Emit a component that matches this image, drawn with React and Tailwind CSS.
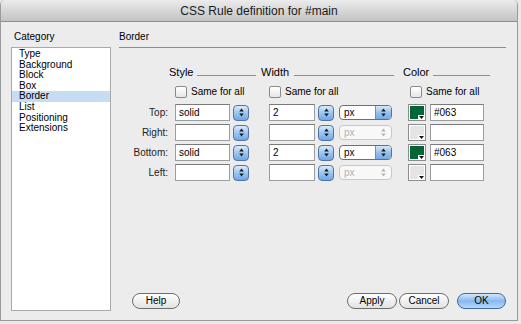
import React from 'react';

const font = { fontFamily: '"Liberation Sans", Arial, sans-serif' };

function Arrows({ color = '#1a1a1a' }) {
  return (
    <svg width="5" height="9" viewBox="0 0 5 9">
      <path d="M2.5 0.5L4.8 3.4H0.2z M2.5 8.5L0.2 5.6H4.8z" fill={color} />
    </svg>
  );
}

function Spin() {
  return (
    <div className="ml-[3px] flex h-[16px] w-[16px] items-center justify-center rounded-[4px] border border-[#5274a3] bg-linear-to-b from-[#dbeafb] via-[#9cc5f0] to-[#6fa8e6]">
      <Arrows />
    </div>
  );
}

function Input({ width, value }) {
  return (
    <div
      className={
        'h-[17px] border border-[#9d9d9d] border-t-[#7a7a7a] bg-white pl-[3px] text-[10px] leading-[15px] text-black ' +
        width
      }
    >
      {value}
    </div>
  );
}

function Select({ disabled }) {
  if (disabled) {
    return (
      <div className="ml-[5px] flex h-[15px] w-[53px] overflow-hidden rounded-[4px] border border-[#c8c8c8] bg-[#f8f8f8]">
        <span className="flex-1 pl-[4px] text-[10px] leading-[13px] text-[#b0b0b0]">px</span>
        <div className="flex w-[16px] items-center justify-center">
          <Arrows color="#b4b4b4" />
        </div>
      </div>
    );
  }
  return (
    <div className="ml-[5px] flex h-[15px] w-[53px] overflow-hidden rounded-[4px] border border-[#6f6f6f] bg-white">
      <span className="flex-1 pl-[4px] text-[10px] leading-[13px]">px</span>
      <div className="flex w-[16px] items-center justify-center border-l border-[#6d8fbe] bg-linear-to-b from-[#d6e8fb] via-[#97c2ef] to-[#74aae6]">
        <Arrows />
      </div>
    </div>
  );
}

function Swatch({ filled }) {
  return (
    <div className="relative ml-[16px] h-[17px] w-[18px] border border-[#8d8d8d] bg-white p-[1px]">
      <div className={filled ? 'h-full w-full bg-[#006633]' : 'h-full w-full bg-[#e4e4e4]'} />
      <div className="absolute right-0 bottom-0 flex h-[5px] w-[7px] items-center justify-center bg-white">
        <svg width="5" height="3" viewBox="0 0 5 3">
          <path d="M0 0H5L2.5 3z" fill="#111" />
        </svg>
      </div>
    </div>
  );
}

function Checkbox({ className }) {
  return (
    <div className={'flex items-center ' + className}>
      <div className="h-[12px] w-[12px] rounded-[2px] border border-[#8a8a8a] bg-linear-to-b from-white to-[#e6e6e6]" />
      <span className="ml-[4px] text-[10px] leading-[12px]">Same for all</span>
    </div>
  );
}

function Row({ label, style, width, color, on }) {
  return (
    <div className="flex h-[17px] items-center">
      <div className="w-[56px] pr-[7px] text-right text-[10px] text-[#222]">{label}</div>
      <Input width="w-[55px]" value={style} />
      <Spin />
      <div className="ml-[20px]">
        <Input width="w-[46px]" value={width} />
      </div>
      <Spin />
      <Select disabled={!on} />
      <Swatch filled={on} />
      <div className="ml-[4px]">
        <Input width="w-[54px]" value={color} />
      </div>
    </div>
  );
}

function Pill({ children, width, primary }) {
  return (
    <button
      className={
        'block h-[16px] rounded-full border text-[10px] leading-[14px] ' +
        width +
        (primary
          ? ' border-[#3f6aa2] bg-linear-to-b from-[#d3e7fc] via-[#86b9ee] to-[#b5d8f8]'
          : ' border-[#6e6e6e] bg-linear-to-b from-white to-[#e2e2e2]')
      }
    >
      {children}
    </button>
  );
}

const categories = ['Type', 'Background', 'Block', 'Box', 'Border', 'List', 'Positioning', 'Extensions'];

export default function App() {
  return (
    <div className="h-[324px] w-[521px] bg-[#e9e9e9] text-black" style={font}>
      <div className="flex h-[321px] w-[518px] flex-col overflow-hidden rounded-t-[5px] border-x border-b border-[#9b9b9b] bg-[#ececec]">
        {/* Title bar */}
        <div className="flex h-[22px] shrink-0 items-center justify-center border-b border-[#8f8f8f] bg-linear-to-b from-[#ececec] to-[#c3c3c3] text-[12px] text-[#1a1a1a]">
          CSS Rule definition for #main
        </div>

        <div className="flex flex-1 pl-[10px] pb-[9px]">
          {/* Category list */}
          <div className="flex w-[100px] flex-col pt-[9px]">
            <div className="pl-[3px] text-[10px] leading-[12px]">Category</div>
            <div className="mt-[4px] flex-1 border border-[#a9a9a9] bg-white pt-[1px]">
              {categories.map((c) => (
                <div
                  key={c}
                  className={
                    'pl-[7px] text-[10px] leading-[10.6px] ' + (c === 'Border' ? 'bg-[#c5dcf2]' : '')
                  }
                >
                  {c}
                </div>
              ))}
            </div>
          </div>

          {/* Border panel */}
          <div className="ml-[8px] flex w-[387px] flex-col pt-[9px]">
            <div className="text-[10px] leading-[12px]">Border</div>
            <div className="mt-[4px] h-px bg-[#8e8e8e]" />

            <div className="mt-[17px] flex h-[14px] text-[11px] leading-[14px]">
              <div className="ml-[50px] flex w-[87px]">
                <span>Style</span>
                <div className="mb-[3px] ml-[4px] h-px flex-1 self-end bg-[#8e8e8e]" />
              </div>
              <div className="ml-[5px] flex w-[133px]">
                <span>Width</span>
                <div className="mb-[3px] ml-[5px] h-px flex-1 self-end bg-[#8e8e8e]" />
              </div>
              <div className="ml-[9px] flex w-[87px]">
                <span>Color</span>
                <div className="mb-[3px] ml-[4px] h-px flex-1 self-end bg-[#8e8e8e]" />
              </div>
            </div>

            <div className="mt-[7px] flex h-[12px] pl-[56px]">
              <Checkbox className="w-[94px]" />
              <Checkbox className="w-[141px]" />
              <Checkbox />
            </div>

            <div className="mt-[6px] flex flex-col gap-[3px]">
              <Row label="Top:" style="solid" width="2" color="#063" on />
              <Row label="Right:" />
              <Row label="Bottom:" style="solid" width="2" color="#063" on />
              <Row label="Left:" />
            </div>

            <div className="mt-auto mb-[2px] flex h-[16px] items-center">
              <div className="ml-[13px] flex">
                <Pill width="w-[48px]">Help</Pill>
              </div>
              <div className="ml-auto flex items-center gap-[2px]">
                <Pill width="w-[50px]">Apply</Pill>
                <Pill width="w-[50px]">Cancel</Pill>
                <div className="ml-[6px] flex">
                  <Pill width="w-[49px]" primary>OK</Pill>
                </div>
              </div>
            </div>
          </div>
        </div>
      </div>
    </div>
  );
}
